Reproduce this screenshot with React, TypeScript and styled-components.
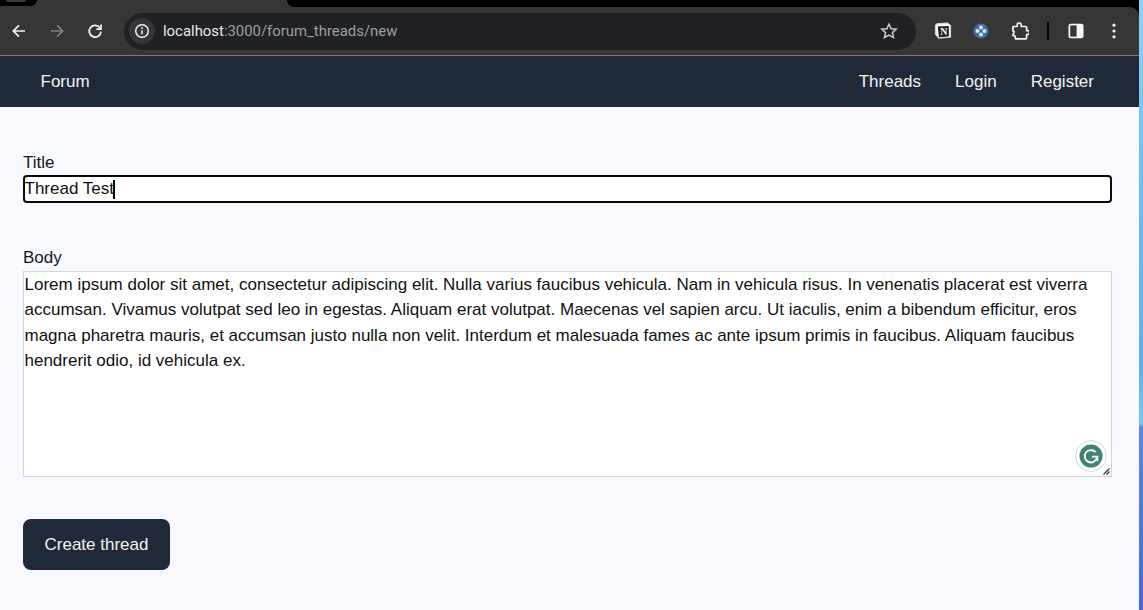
import React from 'react'
import styled, { createGlobalStyle } from 'styled-components'

const GlobalStyle = createGlobalStyle`
  html, body {
    margin: 0;
    padding: 0;
    height: 100%;
    overflow: hidden;
  }
  #root {
    height: 100%;
  }
`

const Screen = styled.div`
  display: flex;
  width: 1143px;
  height: 610px;
  overflow: hidden;
  background: #000;
`

const Browser = styled.div`
  flex: 1;
  display: flex;
  flex-direction: column;
  min-width: 0;
  background: #f8f9ff;
`

const DesktopEdge = styled.div`
  width: 4px;
  background: linear-gradient(180deg, #8ed2f0 0%, #6cc0ec 30%, #62b0e6 60%, #7cc8ea 69.5%, #5b87de 70%, #4a66d8 100%);
`

const Chrome = styled.div`
  background: #000;
  border-bottom: 1px solid #7a7a7a;
  height: 55px;
  display: flex;
  flex-direction: column;
`

const TabStrip = styled.div`
  height: 7px;
  display: flex;
  justify-content: space-between;
  background: #363636;
`

const WindowButton = styled.div`
  width: 37px;
  height: 6px;
  background: #000;
  border-bottom-right-radius: 8px;
`

const WindowButtonShine = styled.div`
  width: 20px;
  height: 2px;
  margin-left: 6px;
  background: #3a3a3a;
  border-radius: 0 0 10px 10px;
`

const TabGap = styled.div`
  width: 852px;
  height: 7px;
  background: #000;
  border-bottom-left-radius: 8px;
`

const Toolbar = styled.div`
  height: 48px;
  display: flex;
  align-items: center;
  background: #363636;
  border-top-right-radius: 9px;
`

const NavIcon = styled.svg<{ $left: number }>`
  margin-left: ${(p) => p.$left}px;
  flex-shrink: 0;
  display: block;
`

const AddressBar = styled.div`
  width: 792px;
  height: 37px;
  margin-left: 21px;
  margin-top: 1px;
  background: #202124;
  border-radius: 19px;
  display: flex;
  align-items: center;
  flex-shrink: 0;
`

const InfoChip = styled.div`
  width: 26px;
  height: 26px;
  margin: -1px 0 0 5px;
  border-radius: 50%;
  background: #35363a;
  display: flex;
  align-items: center;
  justify-content: center;
`

const UrlText = styled.div`
  margin: -1px 0 0 8px;
  font-family: Roboto, sans-serif;
  font-size: 14.9px;
  color: #e8eaed;
  white-space: nowrap;
`

const UrlMuted = styled.span`
  color: #9aa0a6;
`

const StarIcon = styled.svg`
  margin: -1px 18px 0 auto;
  display: block;
`

const ToolbarDivider = styled.div`
  width: 2px;
  height: 18px;
  margin-left: 18px;
  background: #050505;
  flex-shrink: 0;
`

const NavBar = styled.nav`
  height: 51px;
  background: #1f2937;
  display: flex;
  align-items: center;
  justify-content: space-between;
  padding: 0 45px 0 40.5px;
  font-family: "Liberation Sans", Arial, sans-serif;
  font-size: 17px;
  color: #f3f4f6;
`

const NavLinks = styled.div`
  display: flex;
  gap: 34px;
`

const NavLink = styled.a`
  color: inherit;
  text-decoration: none;
`

const Form = styled.form`
  flex: 1;
  padding: 0 27px 0 23px;
  font-family: "Liberation Sans", Arial, sans-serif;
  font-size: 17px;
  color: #111827;
`

const Label = styled.label<{ $top: number }>`
  display: block;
  margin-top: ${(p) => p.$top}px;
  line-height: 19px;
  height: 19px;
`

const TitleField = styled.div`
  box-sizing: border-box;
  height: 28px;
  margin-top: 3px;
  border: 2px solid #0a0a0a;
  border-radius: 4px;
  background: #fff;
  padding-bottom: 1px;
  color: #111;
  display: flex;
  align-items: center;
`

const TitleValue = styled.span`
  margin-left: -0.5px;
`

const Caret = styled.span`
  display: inline-block;
  width: 2px;
  height: 19px;
  margin: 1px 0 0 -1px;
  background: #000;
`

const BodyWrap = styled.div`
  position: relative;
  margin-top: 4px;
  height: 206px;
`

const BodyArea = styled.textarea`
  box-sizing: border-box;
  display: block;
  width: 100%;
  height: 206px;
  margin: 0;
  padding: 0 0.5px;
  border: 1px solid #d1d5db;
  outline: none;
  background: #fff;
  font-family: "Liberation Sans", Arial, sans-serif;
  font-size: 17px;
  line-height: 25.4px;
  color: #111;
  resize: none;
  overflow: hidden;
`

const GrammarlyBadge = styled.div`
  position: absolute;
  right: 5px;
  bottom: 5px;
  width: 32px;
  height: 32px;
  box-sizing: border-box;
  border-radius: 50%;
  background: #fff;
  border: 1px solid #d5d7dd;
  display: flex;
  align-items: center;
  justify-content: center;
`

const ResizeGrip = styled.svg`
  position: absolute;
  right: 2px;
  bottom: 2px;
  display: block;
`

const SubmitButton = styled.button`
  display: block;
  width: 147px;
  height: 51px;
  margin-top: 42px;
  border: none;
  border-radius: 8px;
  background: #1f2937;
  color: #f3f4f6;
  font-family: "Liberation Sans", Arial, sans-serif;
  font-size: 17px;
  padding: 0;
`

const lorem =
  'Lorem ipsum dolor sit amet, consectetur adipiscing elit. Nulla varius faucibus vehicula. Nam in vehicula risus. In venenatis placerat est viverra accumsan. Vivamus volutpat sed leo in egestas. Aliquam erat volutpat. Maecenas vel sapien arcu. Ut iaculis, enim a bibendum efficitur, eros magna pharetra mauris, et accumsan justo nulla non velit. Interdum et malesuada fames ac ante ipsum primis in faucibus. Aliquam faucibus hendrerit odio, id vehicula ex.'

function App() {
  return (
    <>
      <GlobalStyle />
      <Screen>
        <Browser>
          <Chrome>
            <TabStrip>
              <WindowButton>
                <WindowButtonShine />
              </WindowButton>
              <TabGap />
            </TabStrip>
            <Toolbar>
              <NavIcon $left={12} width="14" height="14" viewBox="0 0 14 14" fill="none" stroke="#f1f3f4" strokeWidth="1.7">
                <path d="M13 7H1.6M7 1.3 1.3 7 7 12.7" />
              </NavIcon>
              <NavIcon $left={24} width="14" height="14" viewBox="0 0 14 14" fill="none" stroke="#7f8184" strokeWidth="1.7">
                <path d="M1 7h11.4M7 1.3 12.7 7 7 12.7" />
              </NavIcon>
              <NavIcon $left={23} width="16" height="16" viewBox="0 0 16 16" fill="none" stroke="#f1f3f4" strokeWidth="1.7">
                <path d="M13.2 5.2A5.9 5.9 0 1 0 14 8.6" />
                <path d="M14 1.5v4.6H9.4" />
              </NavIcon>
              <AddressBar>
                <InfoChip>
                  <svg width="16" height="16" viewBox="0 0 16 16" fill="none">
                    <circle cx="8" cy="8" r="6.3" stroke="#f1f3f4" strokeWidth="1.5" />
                    <path d="M8 7.2v4" stroke="#f1f3f4" strokeWidth="1.5" />
                    <circle cx="8" cy="5" r="0.9" fill="#f1f3f4" />
                  </svg>
                </InfoChip>
                <UrlText>
                  localhost<UrlMuted>:3000/forum_threads/new</UrlMuted>
                </UrlText>
                <StarIcon width="18" height="18" viewBox="0 0 18 18" fill="none" stroke="#c9cbce" strokeWidth="1.5">
                  <path d="M9 2l2.1 4.7 5.1.5-3.8 3.4 1.1 5L9 13l-4.5 2.6 1.1-5L1.8 7.2l5.1-.5z" />
                </StarIcon>
              </AddressBar>
              <NavIcon $left={18} width="18" height="18" viewBox="0 0 18 18">
                <path d="M3.4 1.6 13.6 1l3 2.3v12l-12 .9L1.4 12.3V3z" fill="#f5f5f5" stroke="#d8d8d8" strokeWidth="1" />
                <path d="M3.8 4.6 14.8 4v10.6l-9.9.6z" fill="#222" />
                <text x="9.8" y="13" textAnchor="middle" fontFamily="Liberation Serif, serif" fontWeight="700" fontSize="10" fill="#f5f5f5">N</text>
              </NavIcon>
              <NavIcon $left={21} width="16" height="16" viewBox="0 0 16 16">
                <circle cx="8" cy="8" r="7.6" fill="#3c6ea5" />
                <circle cx="8" cy="4.5" r="2" fill="#dce8f4" />
                <circle cx="8" cy="11.5" r="2" fill="#dce8f4" />
                <circle cx="4.5" cy="8" r="2" fill="#dce8f4" />
                <circle cx="11.5" cy="8" r="2" fill="#dce8f4" />
                <circle cx="8" cy="8" r="1" fill="#3c6ea5" />
              </NavIcon>
              <NavIcon $left={22} width="18" height="18" viewBox="0 0 18 18" fill="none" stroke="#f5f5f5" strokeWidth="1.7" strokeLinejoin="round">
                <path d="M2 4.5h4.2V3a2 2 0 0 1 4 0v1.5h4.4a1 1 0 0 1 1 1v3.2h1a1.9 1.9 0 0 1 0 3.8h-1v3.3a1 1 0 0 1-1 1H4.4v-1.4a2 2 0 0 0-2.2-2H1.9l1.2-3.7-1.2-.9z" />
              </NavIcon>
              <ToolbarDivider />
              <NavIcon $left={19} width="16" height="16" viewBox="0 0 16 16">
                <rect x="0.5" y="0.8" width="15" height="14.4" rx="2" fill="#f5f5f5" />
                <rect x="2.2" y="2.4" width="6.4" height="11.2" fill="#363636" />
              </NavIcon>
              <NavIcon $left={28} width="4" height="16" viewBox="0 0 4 16" fill="#f1f3f4">
                <circle cx="2" cy="2.2" r="1.6" />
                <circle cx="2" cy="8" r="1.6" />
                <circle cx="2" cy="13.8" r="1.6" />
              </NavIcon>
            </Toolbar>
          </Chrome>

          <NavBar>
            <NavLink href="#">Forum</NavLink>
            <NavLinks>
              <NavLink href="#">Threads</NavLink>
              <NavLink href="#">Login</NavLink>
              <NavLink href="#">Register</NavLink>
            </NavLinks>
          </NavBar>

          <Form>
            <Label $top={46}>Title</Label>
            <TitleField>
              <TitleValue>Thread Test</TitleValue>
              <Caret />
            </TitleField>

            <Label $top={45}>Body</Label>
            <BodyWrap>
              <BodyArea readOnly defaultValue={lorem} />
              <GrammarlyBadge>
                <svg width="24" height="24" viewBox="0 0 24 24" fill="none">
                  <circle cx="12" cy="12" r="11.5" fill="#3f8374" />
                  <path d="M16.6 8.2A6.2 6.2 0 1 0 18 13.4" stroke="#fff" strokeWidth="1.8" />
                  <path d="M13 12.6h5.4v4.6" stroke="#fff" strokeWidth="1.8" />
                </svg>
              </GrammarlyBadge>
              <ResizeGrip width="7" height="7" viewBox="0 0 7 7" fill="none" stroke="#333" strokeWidth="1.2">
                <path d="M0.5 6.5 6.5 0.5M3.5 6.5l3-3" />
              </ResizeGrip>
            </BodyWrap>

            <SubmitButton type="button">Create thread</SubmitButton>
          </Form>
        </Browser>
        <DesktopEdge />
      </Screen>
    </>
  )
}

export default App
